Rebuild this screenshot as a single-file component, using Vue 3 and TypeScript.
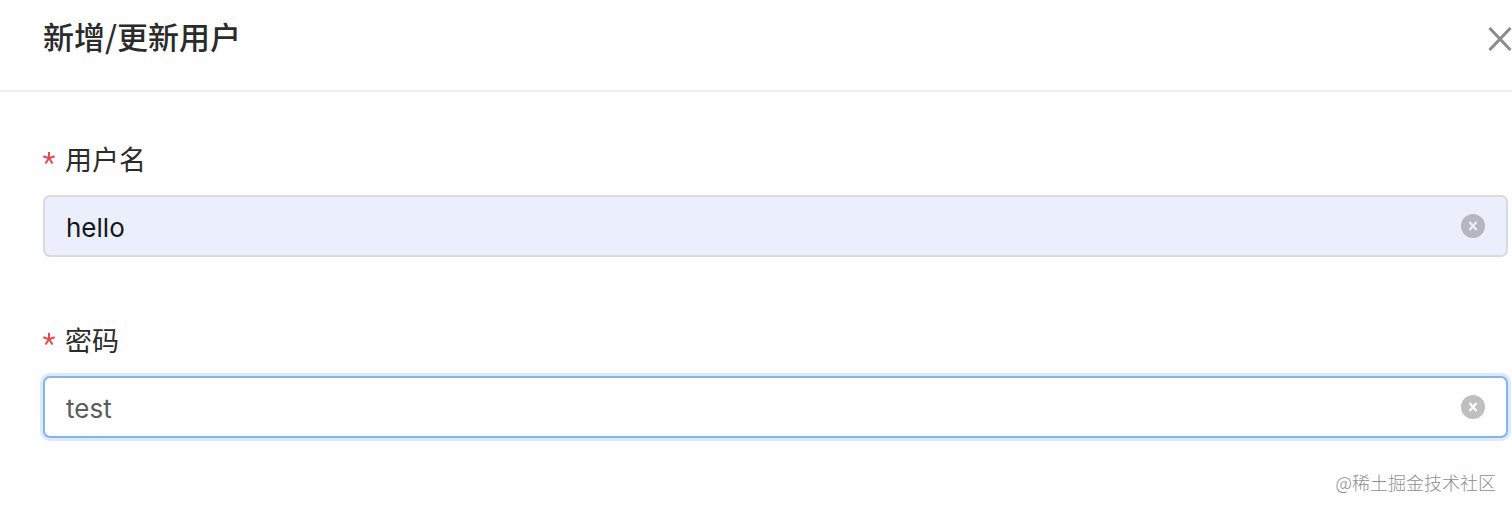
<script setup lang="ts">
import { reactive, ref } from 'vue'

interface Field {
  key: 'username' | 'password'
  label: string
  autofilled: boolean
  active: boolean
}

const fields: Field[] = [
  { key: 'username', label: '用户名', autofilled: true, active: false },
  { key: 'password', label: '密码', autofilled: false, active: true },
]

const form = reactive({ username: 'hello', password: 'test' })
const open = ref(true)
</script>

<template>
  <section v-if="open" class="drawer">
    <header class="header">
      <h1 class="title">新增/更新用户</h1>
      <button class="close" type="button" aria-label="关闭" @click="open = false">
        <svg viewBox="0 0 24 24" width="24" height="24" aria-hidden="true">
          <path d="M1.5 1 L22.5 23 M22.5 1 L1.5 23" fill="none" stroke="#8c8c8c" stroke-width="3" />
        </svg>
      </button>
    </header>

    <form class="form" @submit.prevent>
      <div v-for="field in fields" :key="field.key" class="item">
        <label class="label" :for="field.key">
          <svg class="required" viewBox="0 0 12 12" width="12" height="12" aria-hidden="true">
            <path
              d="M6 6.3V0M6 6.3L.3 4.3M6 6.3L11.700 4.3M6 6.3L2.400 11.500M6 6.3L9.600 11.500"
              fill="none"
              stroke="#e8484b"
              stroke-width="2"
            />
          </svg>
          <span>{{ field.label }}</span>
        </label>
        <div class="control" :class="{ autofilled: field.autofilled, active: field.active }">
          <input :id="field.key" v-model="form[field.key]" class="input" type="text" autocomplete="off" required />
          <button class="clear" type="button" :aria-label="'清除' + field.label" @click="form[field.key] = ''">
            <svg viewBox="0 0 24 24" width="24" height="24" aria-hidden="true">
              <circle cx="12" cy="12" r="12" fill="currentColor" />
              <path class="cross" d="M8.5 8 L15.5 16 M15.5 8 L8.5 16" fill="none" stroke-width="2.2" />
            </svg>
          </button>
        </div>
      </div>
    </form>

    <footer class="credit">@稀土掘金技术社区</footer>
  </section>
</template>

<style>
body {
  background: #fefefe;
}
</style>

<style scoped>
.drawer {
  font-family: Inter, "Noto Sans CJK SC", sans-serif;
  color: #2b2b2b;
}

.header {
  display: flex;
  align-items: center;
  justify-content: space-between;
  padding: 12px 0 24px 43px;
  border-bottom: 2px solid #efefef;
}

.title {
  margin: 0;
  padding-bottom: 6px;
  font-family: "Noto Sans CJK SC", sans-serif;
  font-size: 31px;
  font-weight: 500;
  line-height: 48px;
}

.close,
.clear {
  display: flex;
  padding: 0;
  border: 0;
  background: none;
  color: inherit;
  cursor: pointer;
}

.form {
  display: grid;
  gap: 65px;
  padding: 49px 4px 0 43px;
}

.item {
  display: grid;
  gap: 14px;
}

.label {
  display: flex;
  align-items: center;
  gap: 10px;
  font-size: 27px;
  line-height: 40px;
}

.required {
  padding-bottom: 6px;
}

.control {
  display: flex;
  align-items: center;
  box-sizing: border-box;
  height: 62px;
  padding: 0 21px;
  border: 2px solid #d9d9de;
  border-radius: 7px;
  background: #fefefe;
  color: #bfbfbf;
}

.control.autofilled {
  background: #ebeffb;
  color: #b4b7c0;
}

.control.active {
  border-color: #82b4f0;
  box-shadow: 0 0 0 3px #dbe9fb;
}

.input {
  flex: 1;
  min-width: 0;
  padding: 4px 0 0;
  border: 0;
  outline: 0;
  background: transparent;
  color: #5c5c5c;
  font-family: inherit;
  font-size: 26px;
  line-height: 36px;
}

.autofilled .input {
  color: #15171c;
}

.cross {
  stroke: #fefefe;
}

.autofilled .cross {
  stroke: #ebeffb;
}

.credit {
  padding: 31px 16px 0 0;
  color: #8f8f8f;
  font-family: "Noto Sans CJK SC", sans-serif;
  font-size: 18px;
  font-weight: 300;
  line-height: 26px;
  text-align: right;
}
</style>
